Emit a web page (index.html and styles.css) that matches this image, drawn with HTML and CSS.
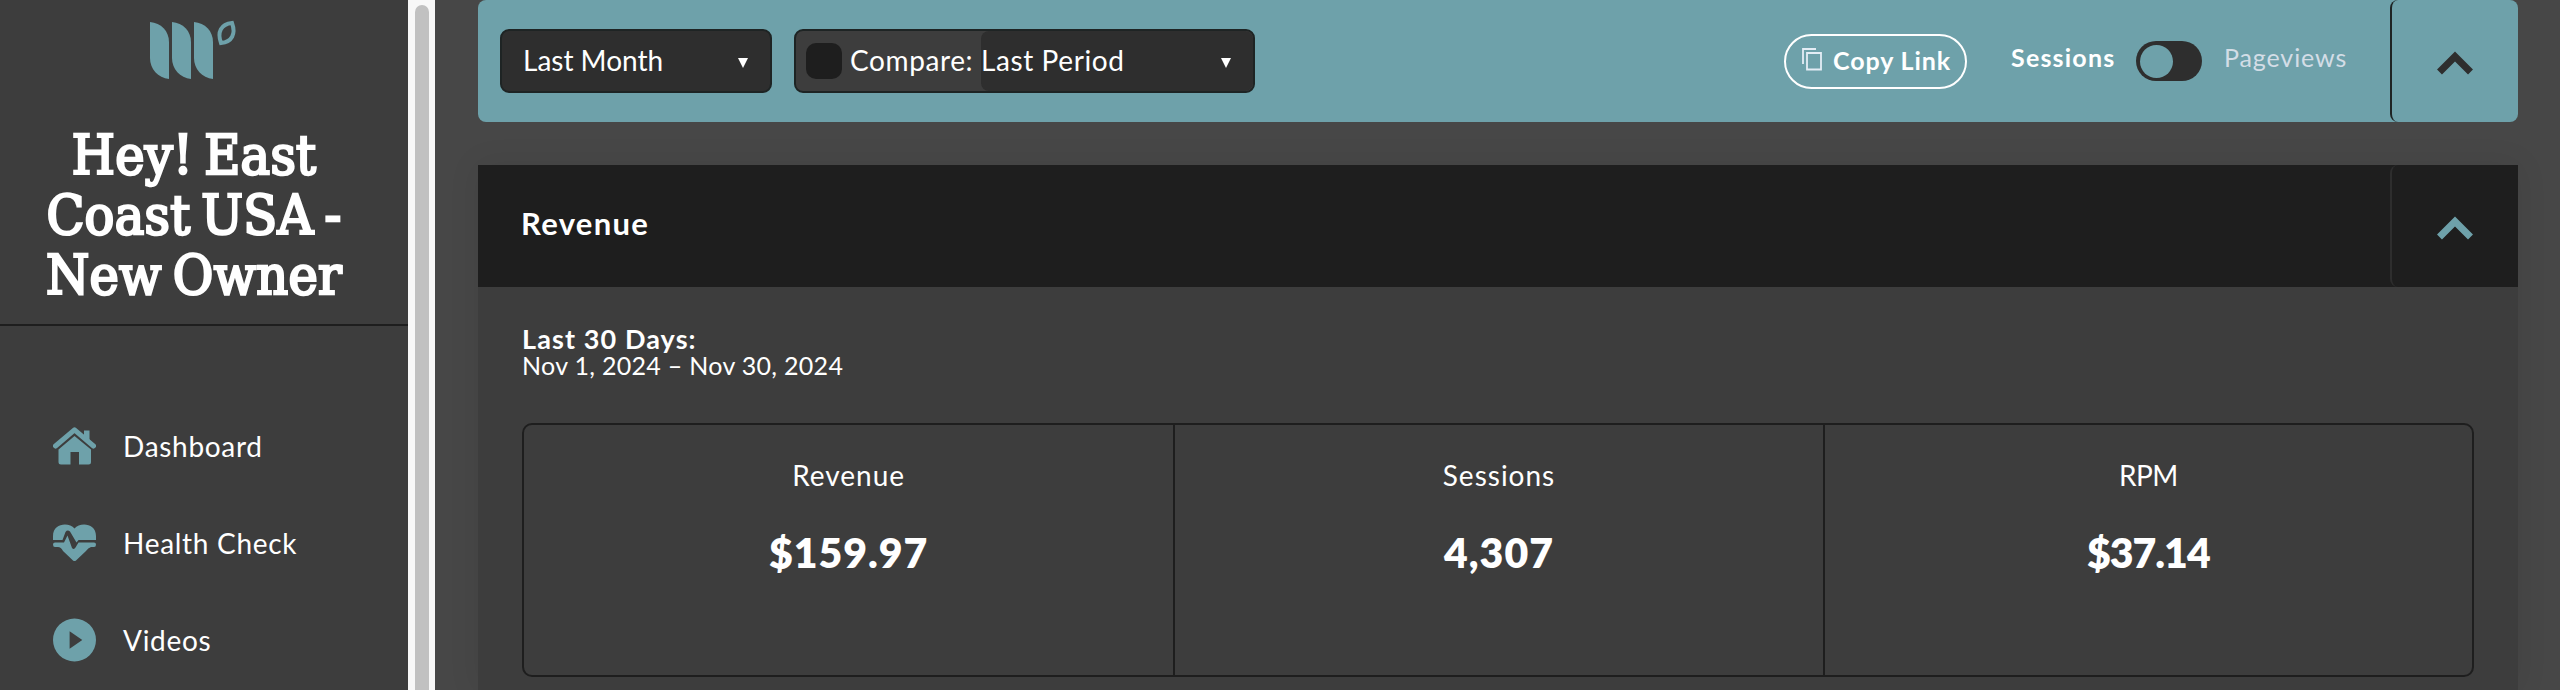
FILE: index.html
```html
<!DOCTYPE html>
<html lang="en">
<head>
  <meta charset="UTF-8">
  <meta name="viewport" content="width=device-width, initial-scale=1.0">
  <title>Dashboard</title>
  <link rel="stylesheet" href="styles.css">
</head>
<body>

  <div class="sidebar">
    <svg class="logo" viewBox="0 0 86 58" width="86" height="58">
      <path d="M0 0C11 1 19 9 19 20V57C8 56 0 47 0 36Z"/>
      <path d="M22 0C33 1 41 9 41 20V57C30 56 22 47 22 36Z"/>
      <path d="M44 0C55 1 63 9 63 20V57C52 56 44 47 44 36Z"/>
      <path class="leaf" d="M82 1C86 12 82 20 71 21C67 10 71 2 82 1Z"/>
    </svg>
    <h1>Hey! East<br>Coast USA -<br>New Owner</h1>

    <ul class="nav">
      <li>
        <svg viewBox="0 0 43 38" width="43" height="38">
          <path d="M31 3.500H36.500V15L31 10Z"/>
          <path class="roof" d="M2.500 19L21.500 2.800L40.500 19"/>
          <path d="M21.500 9L38 22.500V35Q38 37.500 35.500 37.500H26V25H17.500V37.500H8Q5.500 37.500 5.500 35V22.500Z"/>
        </svg>
        <span>Dashboard</span>
      </li>
      <li>
        <svg viewBox="0 0 43 38" width="43" height="38">
          <path d="M21.500 4.500C27 -2 43 -1 43 12V16H25.500L23.500 18.500L17 7.500Q14.500 5.500 12.500 8L9.500 16H0V12C0 -1 16 -2 21.500 4.500Z"/>
          <path d="M2 18.500H11L14.500 11.500L19 24Q21 26 22.500 23.500L25.500 18.500H41Q43 18.500 43 20.500Q43 23 41 23H38Q35 24 33 27L23 36.500Q21.500 37.500 20 36.500L10 27Q8 23 5 23H2Q0 23 0 20.500Q0 18.500 2 18.500Z"/>
        </svg>
        <span>Health Check</span>
      </li>
      <li>
        <svg viewBox="0 0 44 44" width="44" height="44">
          <path fill-rule="evenodd" d="M22 0A22 22 0 1 1 22 44A22 22 0 1 1 22 0ZM17 13V31L30 22Z"/>
        </svg>
        <span>Videos</span>
      </li>
    </ul>
  </div>

  <div class="scrollbar"><div class="thumb"></div></div>

  <div class="main">
    <div class="toolbar">
      <div class="select period">
        <span>Last Month</span>
        <i class="caret"></i>
      </div>
      <div class="select compare">
        <div class="checkbox"></div>
        <span class="compare-label">Compare:</span>
        <div class="compare-value">
          <span>Last Period</span>
          <i class="caret"></i>
        </div>
      </div>

      <div class="copy-link">
        <svg viewBox="0 0 20 23" width="20" height="23">
          <path d="M1 16V1H14M5 5H19V21.500H5Z"/>
        </svg>
        <span>Copy Link</span>
      </div>

      <div class="switch">
        <b>Sessions</b>
        <div class="toggle"><div class="knob"></div></div>
        <span>Pageviews</span>
      </div>

      <div class="collapse">
        <svg viewBox="0 0 36 24" width="36" height="24"><path d="M2.500 21L18 5.500L33.500 21"/></svg>
      </div>
    </div>

    <div class="panel">
      <div class="panel-header">
        <h2>Revenue</h2>
        <div class="collapse">
          <svg viewBox="0 0 36 24" width="36" height="24"><path d="M2.500 21L18 5.500L33.500 21"/></svg>
        </div>
      </div>
      <div class="panel-body">
        <div class="range-title">Last 30 Days:</div>
        <div class="range-dates">Nov 1, 2024 – Nov 30, 2024</div>

        <div class="stats">
          <div class="stat">
            <div class="stat-label">Revenue</div>
            <div class="stat-value">$159.97</div>
          </div>
          <div class="stat">
            <div class="stat-label">Sessions</div>
            <div class="stat-value">4,307</div>
          </div>
          <div class="stat">
            <div class="stat-label">RPM</div>
            <div class="stat-value">$37.14</div>
          </div>
        </div>
      </div>
    </div>
  </div>

</body>
</html>
```
FILE: styles.css
```css
* {
  box-sizing: border-box;
}

body {
  margin: 0;
  display: flex;
  height: 690px;
  overflow: hidden;
  font-family: Lato, "Open Sans", sans-serif;
  font-size: 28px;
  color: #fff;
  background-color: #474747;
}

/* Sidebar */
.sidebar {
  width: 408px;
  flex-shrink: 0;
  background-color: #3d3d3d;
}

.sidebar svg {
  fill: #6ea1aa;
}

.logo {
  display: block;
  margin: 22px 0 0 150px;
  overflow: visible;
}

.logo .leaf {
  fill: none;
  stroke: #6ea1aa;
  stroke-width: 4;
}

h1 {
  margin: 0;
  height: 246px;
  padding: 45px 20px 0 0;
  border-bottom: 2px solid #1e1e1e;
  font-family: "DejaVu Serif Condensed", "DejaVu Serif", serif;
  font-stretch: condensed;
  font-size: 55px;
  font-weight: normal;
  line-height: 60px;
  letter-spacing: 0.3px;
  word-spacing: -5px;
  text-align: center;
  -webkit-text-stroke: 2.5px #fff;
}

.nav {
  list-style: none;
  margin: 0;
  padding: 71px 0 0 53px;
  letter-spacing: 0.7px;
}

.nav li {
  display: flex;
  align-items: center;
  gap: 27px;
  height: 97px;
}

.nav svg {
  width: 43px;
}

.nav .roof {
  fill: none;
  stroke: #6ea1aa;
  stroke-width: 5;
  stroke-linecap: round;
  stroke-linejoin: round;
}

.scrollbar {
  width: 27px;
  flex-shrink: 0;
  padding: 5px 6px 0 7px;
  background-color: #f8f8f8;
}

.thumb {
  height: 685px;
  border-radius: 7px 7px 0 0;
  background-color: #c1c1c1;
}

/* Toolbar */
.main {
  flex: 1;
  padding: 0 42px 0 43px;
}

.toolbar {
  display: flex;
  align-items: center;
  height: 122px;
  padding-left: 22px;
  border-radius: 8px;
  background-color: #6ea1aa;
}

.select {
  display: flex;
  align-items: center;
  height: 64px;
  border: 2px solid #1e2424;
  border-radius: 9px;
  background-color: #2e2e2e;
}

.select span {
  margin-bottom: 2px;
}

.period {
  width: 272px;
  padding: 0 22px 0 21px;
  justify-content: space-between;
}

.compare {
  width: 461px;
  margin-left: 22px;
  padding-left: 10px;
  letter-spacing: 0.6px;
  background-color: #3d3d3d;
}

.checkbox {
  width: 36px;
  height: 36px;
  border-radius: 10px;
  background-color: #1e1e1e;
}

.compare-label {
  width: 139px;
  padding-left: 8px;
}

.compare-value {
  flex: 1;
  display: flex;
  align-items: center;
  justify-content: space-between;
  height: 60px;
  padding-right: 22px;
  border-radius: 8px;
  background-color: #2e2e2e;
}

.caret {
  margin-top: 3px;
  border-left: 5.5px solid transparent;
  border-right: 5.5px solid transparent;
  border-top: 10px solid #fff;
}

.copy-link {
  display: flex;
  align-items: center;
  width: 183px;
  height: 55px;
  margin-left: auto;
  padding-left: 16px;
  border: 2px solid #fff;
  border-radius: 28px;
  font-size: 25px;
  font-weight: bold;
  letter-spacing: 0.9px;
}

.copy-link span {
  margin-bottom: 2px;
}

.copy-link svg {
  margin: 0 11px 4px 0;
  fill: none;
  stroke: #e4edf5;
  stroke-width: 1.8;
}

.switch {
  display: flex;
  align-items: center;
  margin-left: 44px;
  font-size: 25px;
}

.switch b,
.switch span {
  margin-bottom: 9px;
  letter-spacing: 0.9px;
}

.switch b {
  width: 125px;
  letter-spacing: 1.2px;
}

.switch span {
  width: 188px;
  padding-left: 22px;
  color: #d3dde6;
}

.toggle {
  width: 66px;
  height: 40px;
  padding: 4px;
  border-radius: 20px;
  background-color: #2e2e2e;
}

.knob {
  width: 33px;
  height: 33px;
  border-radius: 50%;
  background-color: #6ea1aa;
}

.collapse {
  display: flex;
  align-items: center;
  justify-content: center;
  width: 128px;
  height: 122px;
  padding-top: 3px;
  border-left: 2px solid #1e2424;
  border-radius: 8px;
}

.collapse path {
  fill: none;
  stroke: #2e2e2e;
  stroke-width: 7;
}

/* Revenue panel */
.panel {
  height: 525px;
  margin-top: 43px;
  background-color: #3d3d3d;
  box-shadow: 0 0 30px rgba(0, 0, 0, 0.08);
}

.panel-header {
  display: flex;
  align-items: center;
  justify-content: space-between;
  height: 122px;
  padding-left: 43px;
  background-color: #1e1e1e;
}

.panel-header .collapse {
  border-left-color: #2e2e2e;
}

.panel-header .collapse path {
  stroke: #6ea1aa;
}

h2 {
  margin: 0 0 6px;
  font-size: 31px;
  letter-spacing: 1.3px;
}

.panel-body {
  padding: 38px 44px 0;
}

.range-title,
.range-dates {
  line-height: 27px;
}

.range-title {
  font-size: 27px;
  font-weight: bold;
  letter-spacing: 1.1px;
}

.range-dates {
  font-size: 25px;
  letter-spacing: 0.3px;
}

.stats {
  display: grid;
  grid-template-columns: repeat(3, 1fr);
  height: 254px;
  margin-top: 44px;
  border: 2px solid #1e1e1e;
  border-radius: 10px;
}

.stat {
  padding-top: 32px;
  text-align: center;
}

.stat + .stat {
  border-left: 2px solid #1e1e1e;
}

.stat-label {
  line-height: 36px;
  letter-spacing: 1px;
}

.stat-value {
  margin-top: 30px;
  font-size: 41px;
  font-weight: 800;
  line-height: 60px;
  letter-spacing: 1px;
}

.stat:last-child .stat-label {
  letter-spacing: -0.5px;
}

.stat:last-child .stat-value {
  letter-spacing: -1px;
}
```
